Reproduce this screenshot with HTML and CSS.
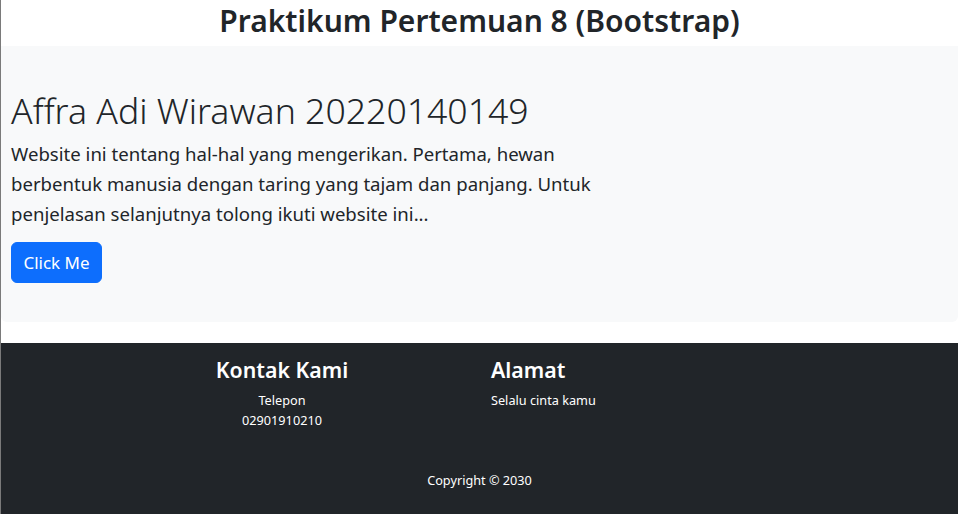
FILE: index.html
```html
<!DOCTYPE html>
<html lang="id">
<head>
<meta charset="utf-8">
<title>Praktikum Pertemuan 8</title>
<link rel="stylesheet" href="styles.css">
</head>
<body>
<h1 class="page-title">Praktikum Pertemuan 8 (Bootstrap)</h1>
<section class="jumbotron">
  <h1 class="display">Affra Adi Wirawan 20220140149</h1>
  <p class="lead">Website ini tentang hal-hal yang mengerikan. Pertama, hewan berbentuk manusia dengan taring yang tajam dan panjang. Untuk penjelasan selanjutnya tolong ikuti website ini...</p>
  <button class="btn" type="button">Click Me</button>
</section>
<footer class="footer">
  <div class="cols">
    <div class="col col-contact">
      <h4>Kontak Kami</h4>
      <p>Telepon</p>
      <p>02901910210</p>
    </div>
    <div class="col col-address">
      <h4>Alamat</h4>
      <p>Selalu cinta kamu</p>
    </div>
  </div>
  <p class="copyright">Copyright © 2030</p>
</footer>
</body>
</html>
```
FILE: styles.css
```css
* { box-sizing: border-box; }
html, body { margin: 0; padding: 0; }
body {
  font-family: "Noto Sans", "Open Sans", sans-serif;
  color: #212529;
  background: #fff;
  border-left: 1px solid #7a7a7a;
  min-height: 514px;
}
.page-title {
  margin: 0;
  height: 46px;
  padding-top: 1px;
  text-align: center;
  font-size: 30px;
  font-weight: 600;
  line-height: 40px;
}
.jumbotron {
  background: #f8f9fa;
  border-radius: 0 0 6px 6px;
  padding: 42px 11px 39px 10px;
  margin-bottom: 21px;
}
.display {
  margin: 0 0 7px;
  font-size: 35.6px;
  font-weight: 300;
  line-height: 44px;
}
.lead {
  margin: 0 0 13px;
  max-width: 596px;
  font-size: 18.6px;
  line-height: 30px;
}
.btn {
  display: block;
  white-space: nowrap;
  font-family: inherit;
  font-size: 17px;
  line-height: 25px;
  color: #fff;
  background: #0d6efd;
  border: 1px solid #0d6efd;
  border-radius: 6px;
  padding: 7px 0;
  width: 91px;
  text-align: center;
}
.footer {
  background: #212529;
  color: #fff;
  padding: 13px 0 32px;
  font-size: 12.7px;
}
.cols {
  display: flex;
}
.col h4 {
  margin: 0 0 6px;
  font-size: 21.3px;
  font-weight: 600;
  line-height: 28px;
}
.col p {
  margin: 0;
  line-height: 20px;
}
.col-contact {
  width: 170px;
  margin-left: 196px;
  text-align: center;
}
.col-address {
  margin-left: 124px;
}
.copyright {
  margin: 40px 0 0;
  text-align: center;
  line-height: 20px;
}
```
